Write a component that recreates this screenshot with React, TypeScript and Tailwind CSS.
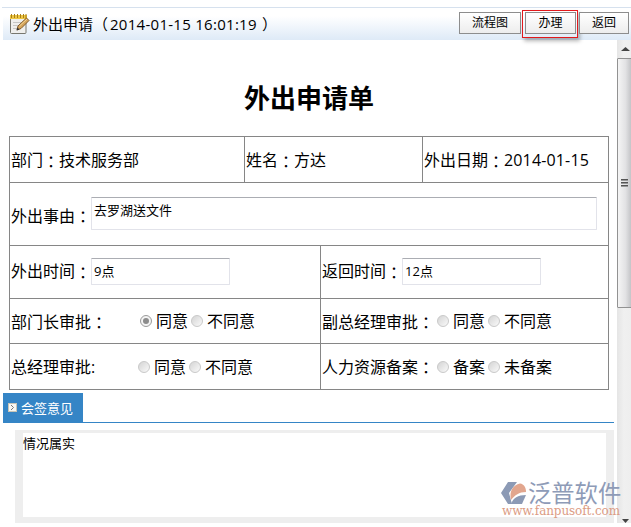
import type { ReactNode } from "react";

function Colon() {
  return (
    <span className="inline-block w-4 translate-y-px font-['Noto_Sans_CJK_TC','Noto_Sans_CJK_SC',sans-serif]">：</span>
  );
}

function Radio({ checked = false }: { checked?: boolean }) {
  return (
    <span
      className={`flex size-3 shrink-0 items-center justify-center rounded-full border ${
        checked ? "border-[#9b9b9b] bg-[#f4f4f4]" : "border-[#c9c9c9] bg-linear-to-br from-[#d4d4d4] to-[#fafafa]"
      }`}
    >
      {checked && <span className="size-[6px] rounded-full bg-[#8c8c8c]" />}
    </span>
  );
}

function Choices({ first, second, checked = false }: { first: string; second: string; checked?: boolean }) {
  return (
    <span className="flex items-center">
      <Radio checked={checked} />
      <span className="ml-1 w-8">{first}</span>
      <span className="ml-[3px]">
        <Radio />
      </span>
      <span className="ml-1">{second}</span>
    </span>
  );
}

function Cell({ className = "", children }: { className?: string; children: ReactNode }) {
  return (
    <div className={`flex items-center whitespace-nowrap border-r border-b border-[#868686] pl-px ${className}`}>
      {children}
    </div>
  );
}

function Field({ value, className = "" }: { value: string; className?: string }) {
  return (
    <div
      className={`rounded-[1px] border border-[#e2e3ea] border-t-[#abadb3] bg-white pl-[2px] text-[13px] ${className}`}
    >
      {value}
    </div>
  );
}

function Button({ children, className = "" }: { children: ReactNode; className?: string }) {
  return (
    <button
      className={`flex h-[22px] items-center justify-center border border-[#8d8d8d] bg-linear-to-b from-white to-[#ededed] pb-px text-[12px] leading-none ${className}`}
    >
      {children}
    </button>
  );
}

function NoteIcon() {
  return (
    <svg width="21" height="21" viewBox="0 0 21 21" className="shrink-0">
      <rect x="1.500" y="2.500" width="15.500" height="17" rx="1" fill="#efefed" stroke="#77776f" />
      <path d="M4 8.500h8M4 11.500h6M4 14.500h4" stroke="#c6c6c4" />
      <rect x="1" y="1" width="17" height="4" fill="#edc644" />
      <path d="M2.500 0v4M5.500 0v4M8.500 0v4M11.500 0v4M14.500 0v4M17 0v4" stroke="#a98018" />
      <path d="M8 16l1-4L17.500 4l2.500 2.500-8 8z" fill="#d5a55c" stroke="#805a29" />
      <path d="M10.500 12l7.500-7" stroke="#f4d595" />
      <path d="M7.500 16.500l1-3 2 2z" fill="#333" />
    </svg>
  );
}

function Watermark() {
  return (
    <div className="absolute top-[481px] left-[501px] w-[122px]">
      <div className="flex h-6 items-center">
        <svg width="27" height="24" viewBox="0 0 27 24" className="shrink-0">
          <path d="M7 1h9L8 12l3 11H7L0 12z" fill="#8c9ab5" />
          <path d="M10 19C8 10 12 4 19 2.500c4 .5 6 4 6 8.500-7 0-11 3-15 8z" fill="#e2a68e" />
          <path d="M10 23c2-6 7-9 15-9l-4 9z" fill="#8c9ab5" />
        </svg>
        <span className="text-[23.300px] leading-6 text-[#8e9bb7]">泛普软件</span>
      </div>
      <div className="ml-[1px] font-['DejaVu_Serif',serif] text-[12px] leading-[13px] tracking-[-0.100px] text-[#dc9c84]">
        www.fanpusoft.com
      </div>
    </div>
  );
}

function Scrollbar() {
  return (
    <div className="flex h-[483px] w-[14px] shrink-0 flex-col overflow-hidden bg-linear-to-r from-[#e5e5e5] via-[#f0f0f0] to-[#eeeeee]">
      <div className="flex h-[18px] items-center pl-1">
        <svg width="9" height="4" viewBox="0 0 9 4">
          <path d="M4.500 0L9 4H0z" fill="#444" />
        </svg>
      </div>
      <div className="flex h-[250px] w-[17px] shrink-0 flex-col items-start justify-center gap-px rounded-l-[1px] border border-[#929292] bg-linear-to-r from-[#f5f5f5] via-[#e2e2e4] to-[#b9babd] pl-[3px]">
        <span className="h-[2px] w-[7px] border-t border-[#555] bg-[#999]" />
        <span className="h-[2px] w-[7px] border-t border-[#555] bg-[#999]" />
        <span className="h-[2px] w-[7px] border-t border-[#555] bg-[#999]" />
      </div>
      <div className="mt-auto pl-[5px]">
        <svg width="7" height="4" viewBox="0 0 7 4" className="block">
          <path d="M0 0h7L3.500 4z" fill="#444" />
        </svg>
      </div>
    </div>
  );
}

export default function App() {
  return (
    <div className="relative h-[527px] w-[631px] overflow-hidden bg-white pt-[7px] font-['Open_Sans','Noto_Sans_CJK_SC',sans-serif] text-base leading-6 text-black">
      <div className="ml-[2px] h-px bg-[#d6e1ee]" />
      <header className="ml-[3px] flex h-8 items-start bg-linear-to-b from-white from-25% to-[#deeaf7]">
        <div className="flex items-center pt-[5px] pl-[6px] whitespace-nowrap">
          <NoteIcon />
          <span className="ml-[3px] flex text-[15px] leading-[22px]">
            <span className="w-[60px]">外出申请</span>
            <span className="w-4">（</span>
            <span className="w-[150px] pl-[1px] text-[15px] tracking-[0.280px]">2014-01-15 16:01:19</span>
            <span className="pl-[3px]">）</span>
          </span>
        </div>
        <div className="mt-[2px] mr-[2px] ml-auto flex items-start">
          <Button className="mt-[2px] w-[62px]">流程图</Button>
          <div className="mr-px ml-px h-7 w-14 border border-[#e2191c] p-px pl-[2px] shadow-[2px_3px_4px_rgba(0,0,0,0.3)]">
            <Button className="w-[51px]">办理</Button>
          </div>
          <Button className="mt-[2px] w-[50px]">返回</Button>
        </div>
      </header>
      <div className="flex">
        <main className="flex h-[483px] w-[617px] flex-col">
          <h1 className="mt-[39px] h-[57px] pl-px text-center text-[26px] leading-[38px] font-bold">外出申请单</h1>
          <section className="ml-[9px] w-[600px] border-t border-l border-[#868686]">
            <div className="grid h-[46px] grid-cols-[235px_178px_186px]">
              <Cell>部门<Colon />技术服务部</Cell>
              <Cell>姓名<Colon />方达</Cell>
              <Cell>外出日期<Colon /><span className="tracking-[0.150px]">2014-01-15</span></Cell>
            </div>
            <Cell className="h-[63px]">
              <span className="pt-[3px]">外出事由<Colon /></span>
              <Field value="去罗湖送文件" className="mb-[2px] h-[33px] w-[506px]" />
            </Cell>
            <div className="grid grid-cols-[311px_288px] grid-rows-[53px_45px_46px]">
              <Cell className="pb-[2px]">
                外出时间<Colon />
                <Field value="9点" className="h-[27px] w-[139px] leading-[25px]" />
              </Cell>
              <Cell className="pb-[2px]">
                返回时间<Colon />
                <Field value="12点" className="h-[27px] w-[139px] leading-[25px]" />
              </Cell>
              <Cell>
                <span className="w-[129px]">部门长审批<Colon /></span>
                <Choices first="同意" second="不同意" checked />
              </Cell>
              <Cell>
                <span className="w-[115px]">副总经理审批<Colon /></span>
                <Choices first="同意" second="不同意" />
              </Cell>
              <Cell>
                <span className="w-[127px]">总经理审批:</span>
                <Choices first="同意" second="不同意" />
              </Cell>
              <Cell>
                <span className="w-[115px]">人力资源备案<Colon /></span>
                <Choices first="备案" second="未备案" />
              </Cell>
            </div>
          </section>
          <div className="mt-[3px] ml-[3px] flex h-[30px] w-[611px] border-b border-[#3585c6]">
            <div className="flex h-[30px] w-20 shrink-0 items-center bg-[#3585c6] pb-px pl-[5px] text-[13px] text-white">
              <svg width="9" height="9" viewBox="0 0 9 9" className="mr-1">
                <rect x=".5" y=".5" width="8" height="8" fill="#f8f8f3" stroke="#c9c5b7" />
                <path d="M3 2l2.500 2.500L3 7" fill="none" stroke="#777" />
              </svg>
              会签意见
            </div>
          </div>
          <div className="mt-[7px] ml-[15px] h-[93px] w-[599px] bg-[#eeeeee] px-2 pt-[3px] pb-[6px]">
            <div className="h-full bg-white text-[13px] leading-[20px]">情况属实</div>
          </div>
        </main>
        <Scrollbar />
      </div>
      <Watermark />
    </div>
  );
}
